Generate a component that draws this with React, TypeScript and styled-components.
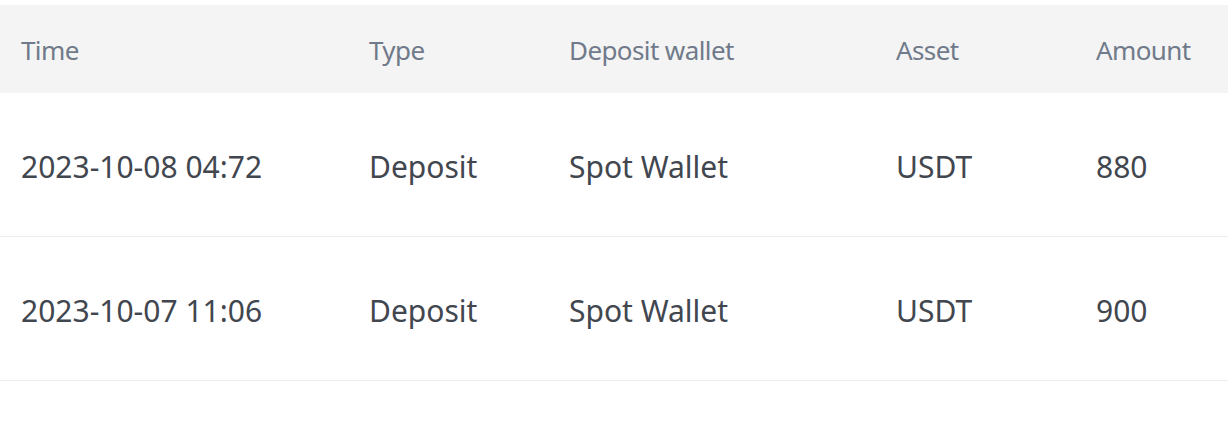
import React from "react";
import styled, { createGlobalStyle } from "styled-components";

const GlobalStyle = createGlobalStyle`
  body {
    margin: 0;
    background: #ffffff;
    font-family: "Noto Sans", "Open Sans", sans-serif;
  }
`;

const columns = "369px 200px 327px 200px 1fr";

const Table = styled.div`
  padding-top: 5px;
  width: 1228px;
`;

const HeaderRow = styled.div`
  display: grid;
  grid-template-columns: ${columns};
  align-items: center;
  height: 88px;
  background: #f4f4f4;
`;

const Row = styled.div`
  display: grid;
  grid-template-columns: ${columns};
  align-items: center;
  height: 143px;
  border-bottom: 1px solid #eaecef;
`;

const HeadCell = styled.div<{ $first?: boolean }>`
  padding-left: ${(p) => (p.$first ? "21px" : "0")};
  font-size: 26px;
  letter-spacing: -0.6px;
  color: #707a8a;
  line-height: 1;
  padding-top: 2px;
`;

const Cell = styled.div<{ $first?: boolean }>`
  padding-left: ${(p) => (p.$first ? "21px" : "0")};
  font-size: 30px;
  color: #41464f;
  line-height: 1;
  padding-top: 4px;
`;

const rows = [
  { time: "2023-10-08 04:72", type: "Deposit", wallet: "Spot Wallet", asset: "USDT", amount: "880" },
  { time: "2023-10-07 11:06", type: "Deposit", wallet: "Spot Wallet", asset: "USDT", amount: "900" },
];

export default function App() {
  return (
    <>
      <GlobalStyle />
      <Table>
        <HeaderRow>
          <HeadCell $first>Time</HeadCell>
          <HeadCell>Type</HeadCell>
          <HeadCell>Deposit wallet</HeadCell>
          <HeadCell>Asset</HeadCell>
          <HeadCell>Amount</HeadCell>
        </HeaderRow>
        {rows.map((r) => (
          <Row key={r.time}>
            <Cell $first>{r.time}</Cell>
            <Cell>{r.type}</Cell>
            <Cell>{r.wallet}</Cell>
            <Cell>{r.asset}</Cell>
            <Cell>{r.amount}</Cell>
          </Row>
        ))}
      </Table>
    </>
  );
}
